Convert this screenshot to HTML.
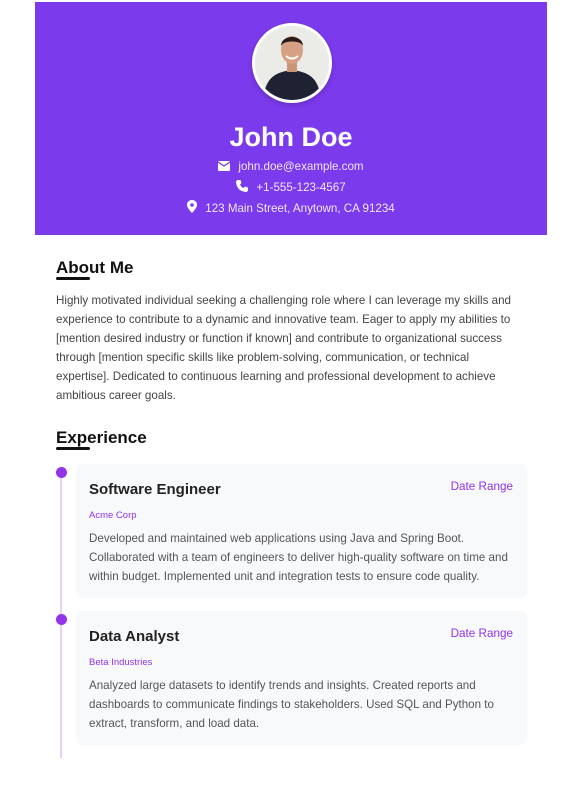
<!DOCTYPE html>
<html><head><meta charset="utf-8"><style>
*{margin:0;padding:0;box-sizing:border-box}
body{width:585px;height:786px;background:#fff;font-family:"Liberation Sans",sans-serif;position:relative;overflow:hidden}
.hdr{position:absolute;left:35px;top:2px;width:512px;height:233px;background:#7c3aed;color:#fff;text-align:center}
.av{position:absolute;left:217px;top:21px;width:80px;height:80px;border-radius:50%;border:3px solid #fff;overflow:hidden;background:#ececea;box-shadow:0 2px 6px rgba(0,0,0,.2)}
.name{position:absolute;left:0;right:0;top:120px;font-size:27px;font-weight:bold}
.ct{position:absolute;left:0;right:0;font-size:11.6px;color:#efe6ff}
.ct svg{vertical-align:-1px;margin-right:8px}
h2{position:absolute;left:56px;font-size:17px;font-weight:bold;color:#111}
.bar{position:absolute;left:56px;width:34px;height:3px;background:#111;border-radius:2px}
.p{position:absolute;left:56px;width:500px;white-space:nowrap;font-size:11.6px;line-height:19px;color:#444}
.line{position:absolute;left:60px;top:472px;width:2px;height:286px;background:#e4d0fb}
.dot{position:absolute;left:56px;width:11px;height:11px;border-radius:50%;background:#9333ea}
.card{position:absolute;left:76px;width:451px;height:134px;background:#f8f9fb;border-radius:7px}
.card .t{position:absolute;left:13px;top:17px;font-size:15px;font-weight:bold;color:#222}
.card .d{position:absolute;right:14px;top:16px;font-size:11.7px;color:#9333ea}
.card .c{position:absolute;left:13px;top:46px;font-size:9.5px;color:#9333ea}
.card .x{position:absolute;left:13px;top:65px;width:430px;font-size:11.6px;line-height:19px;color:#555}
</style></head><body>
<div class="hdr">
<div class="av"><svg width="74" height="74" viewBox="0 0 74 74">
<rect width="74" height="74" fill="#ebebe8"/>
<path d="M8 74 C10 52 20 46 37 44 C54 46 64 52 66 74Z" fill="#1e2233"/>
<rect x="32" y="34" width="10" height="12" fill="#c99577"/>
<ellipse cx="37" cy="24" rx="11" ry="14" fill="#d5a083"/>
<path d="M26 20 C26 8 48 8 48 20 C46 14 28 14 26 20Z" fill="#2a1d17"/>
<path d="M31 30 Q37 35 43 30" stroke="#fff" stroke-width="2" fill="none"/>
</svg></div>
<div class="name">John Doe</div>
<div class="ct" style="top:158px"><svg width="12" height="10" viewBox="0 0 12 10"><rect width="12" height="10" rx="1" fill="#fff"/><path d="M0 1 L6 5 L12 1" stroke="#7c3aed" stroke-width="1.3" fill="none"/></svg>john.doe@example.com</div>
<div class="ct" style="top:178px"><svg width="12" height="12" viewBox="0 0 12 12"><path d="M2 0 L4.5 0 L5.5 3 L4 4.5 C5 6.5 5.5 7 7.5 8 L9 6.5 L12 7.5 L12 10 C12 11 11 12 10 12 C4 11.5 0.5 8 0 2 C0 1 1 0 2 0Z" fill="#fff"/></svg>+1-555-123-4567</div>
<div class="ct" style="top:198px"><svg width="10" height="13" viewBox="0 0 10 13"><path d="M5 0 C8 0 10 2.2 10 5 C10 8 5 13 5 13 C5 13 0 8 0 5 C0 2.2 2 0 5 0Z" fill="#fff"/><circle cx="5" cy="5" r="1.8" fill="#7c3aed"/></svg>123 Main Street, Anytown, CA 91234</div>
</div>
<h2 style="top:258px">About Me</h2><div class="bar" style="top:277px"></div>
<div class="p" style="top:291px">Highly motivated individual seeking a challenging role where I can leverage my skills and<br>experience to contribute to a dynamic and innovative team. Eager to apply my abilities to<br>[mention desired industry or function if known] and contribute to organizational success<br>through [mention specific skills like problem-solving, communication, or technical<br>expertise]. Dedicated to continuous learning and professional development to achieve<br>ambitious career goals.</div>
<h2 style="top:428px">Experience</h2><div class="bar" style="top:447px"></div>
<div class="line"></div>
<div class="dot" style="top:467px"></div>
<div class="card" style="top:464px"><div class="t">Software Engineer</div><div class="d">Date Range</div><div class="c">Acme Corp</div><div class="x">Developed and maintained web applications using Java and Spring Boot. Collaborated with a team of engineers to deliver high-quality software on time and within budget. Implemented unit and integration tests to ensure code quality.</div></div>
<div class="dot" style="top:614px"></div>
<div class="card" style="top:611px"><div class="t">Data Analyst</div><div class="d">Date Range</div><div class="c">Beta Industries</div><div class="x">Analyzed large datasets to identify trends and insights. Created reports and dashboards to communicate findings to stakeholders. Used SQL and Python to extract, transform, and load data.</div></div>
</body></html>
